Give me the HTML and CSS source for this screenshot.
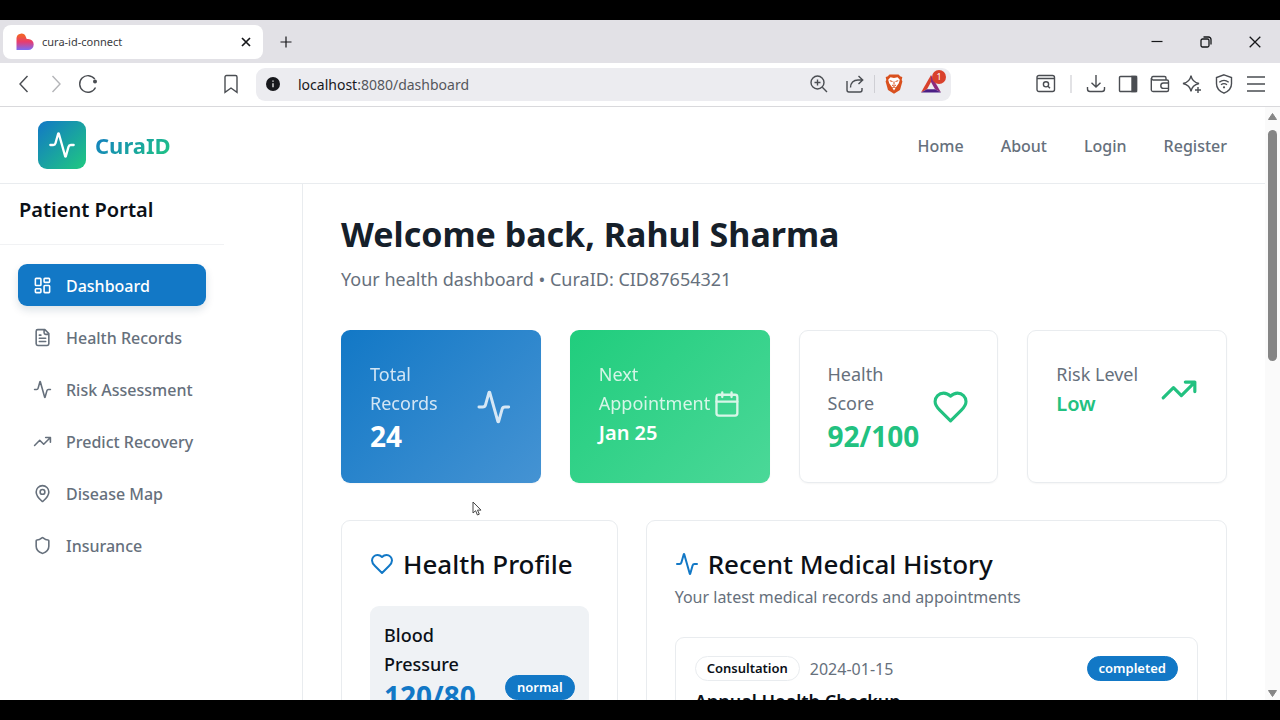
FILE: index.html
```html
<!DOCTYPE html>
<html lang="en">
<head>
<meta charset="utf-8">
<meta name="viewport" content="width=device-width, initial-scale=1">
<title>cura-id-connect</title>
<link rel="stylesheet" href="styles.css">
</head>
<body>
<svg class="defs" aria-hidden="true">
  <defs>
    <linearGradient id="heart-fill" x1="0" y1="0" x2="0" y2="1"><stop offset="0.1" stop-color="#f2622a"/><stop offset="0.5" stop-color="#e83c6e"/><stop offset="1" stop-color="#7a6cf6"/></linearGradient>
    <symbol id="i-activity" viewBox="0 0 24 24"><path d="M22 12h-2.48a2 2 0 0 0-1.93 1.46l-2.35 8.36a.25.25 0 0 1-.48 0L9.24 2.18a.25.25 0 0 0-.48 0l-2.35 8.36A2 2 0 0 1 4.49 12H2"/></symbol>
    <symbol id="i-heart" viewBox="0 0 24 24"><path d="M19 14c1.49-1.46 3-3.21 3-5.5A5.5 5.5 0 0 0 16.5 3c-1.76 0-3 .5-4.5 2-1.5-1.5-2.74-2-4.5-2A5.5 5.5 0 0 0 2 8.5c0 2.3 1.5 4.05 3 5.5l7 7Z"/></symbol>
    <symbol id="i-trend" viewBox="0 0 24 24"><path d="m22 7-8.500 8.500-5-5L2 17M16 7h6v6"/></symbol>
  </defs>
</svg>

<div class="window">
  <div class="tabbar">
    <div class="tab">
      <svg class="favicon" viewBox="0 0 18 18"><path d="M0.500 5a4.800 4.800 0 0 1 9.300-1.200l.9 2.200h1.500a5.400 5.400 0 0 1 0 11H0.500z" fill="url(#heart-fill)"/></svg>
      <span class="tab-title">cura-id-connect</span>
      <button class="tab-btn" aria-label="Close tab"><svg class="ic10" viewBox="0 0 10 10"><path d="M1 1l8 8M9 1L1 9" stroke-width="1.700"/></svg></button>
    </div>
    <button class="tab-btn" aria-label="New tab"><svg class="ic12" viewBox="0 0 12 12"><path d="M6 0.500v11M0.500 6h11" stroke-width="1.200"/></svg></button>
    <div class="window-controls">
      <button class="tab-btn" aria-label="Minimize"><svg class="ic12" viewBox="0 0 12 12"><path d="M0.500 5.500h11" stroke-width="1.200"/></svg></button>
      <button class="tab-btn" aria-label="Restore"><svg class="ic12" viewBox="0 0 12 12"><rect x="1" y="3" width="8" height="8" rx="1.500" stroke-width="1.300"/><path d="M3.500 1h5A2.500 2.500 0 0 1 11 3.500v5" stroke-width="1.300"/></svg></button>
      <button class="tab-btn" aria-label="Close window"><svg class="ic12" viewBox="0 0 12 12"><path d="M0.700 0.700l10.600 10.600M11.300 0.700L0.700 11.300" stroke-width="1.300"/></svg></button>
    </div>
  </div>

  <div class="toolbar">
    <div class="history">
      <button class="tool" aria-label="Back"><svg class="ic20" viewBox="0 0 20 20"><path d="M13.500 2L6 10l7.500 8"/></svg></button>
      <button class="tool faint" aria-label="Forward"><svg class="ic20" viewBox="0 0 20 20"><path d="M6.500 2L14 10l-7.500 8"/></svg></button>
      <button class="tool" aria-label="Reload"><svg class="ic20" viewBox="0 0 20 20"><path d="M17.500 13.500A8.300 8.300 0 1 1 16.800 5.200"/><circle cx="17" cy="7.500" r="2" fill="currentColor" stroke="none"/></svg></button>
    </div>
    <button class="tool bookmark" aria-label="Bookmark"><svg class="ic20" viewBox="0 0 20 20"><path d="M4 3a1.500 1.500 0 0 1 1.500-1.500h9A1.500 1.500 0 0 1 16 3v15.300l-6-4.300-6 4.300z"/></svg></button>
    <div class="address">
      <svg class="ic14" viewBox="0 0 14 14"><circle cx="7" cy="7" r="7" fill="#17181c" stroke="none"/><path d="M7 6.200v4M7 3.600v1.200" stroke="#fff" stroke-width="1.200"/></svg>
      <span class="url">localhost<span class="url-rest">:8080/dashboard</span></span>
      <button class="tool" aria-label="Zoom"><svg class="ic18" viewBox="0 0 18 18"><circle cx="7.500" cy="7.500" r="6.500"/><path d="M12.300 12.300L17 17M7.500 4.500v6M4.500 7.500h6"/></svg></button>
      <button class="tool" aria-label="Share"><svg class="ic18" viewBox="0 0 18 18"><path d="M1 6v9a2 2 0 0 0 2 2h11a2 2 0 0 0 2-2v-2M4.500 12.500c0-4.500 3-7.500 7.500-7.500h4.500M12.500 1l4.200 4-4.200 4"/></svg></button>
      <span class="divider"></span>
      <button class="tool" aria-label="Brave Shields"><svg class="shield" viewBox="0 0 18 20"><path d="M4.500 0.500h9l2 2 1.800.5-.6 3 .7 1.500-2.400 8.500L9 19.800 3 16 .6 7.500 1.300 6 .7 3l1.800-.5z" fill="#d9501e" stroke="none"/><path d="M5.500 3.200L9 4l3.500-.8 2.300 2.600-1 3.400-2.300 3.200L9 16.500l-2.500-4.100-2.300-3.200-1-3.400z" fill="#fff" stroke="none"/><path d="M4.800 6.700l2.700.8M13.200 6.700l-2.700.8M9 7.500v3.200M7 11l2 1.200 2-1.200M7.200 13.800L9 13l1.800.8" stroke="#d9501e" stroke-width="1"/></svg></button>
      <button class="tool rewards" aria-label="Brave Rewards"><svg class="ic20" viewBox="0 0 20 20"><path d="M10 1L0 18.500l6-3.300L10 8z" fill="#d9412c" stroke="none"/><path d="M10 1v7l4 7.200 6 3.300z" fill="#8d2a7c" stroke="none"/><path d="M0 18.500l6-3.300h8l6 3.300z" fill="#4c1f85" stroke="none"/></svg><span class="badge">1</span></button>
    </div>
    <div class="extensions">
      <button class="tool" aria-label="Search tabs"><svg class="ic20" viewBox="0 0 20 20"><rect x="1" y="1.500" width="17.500" height="16" rx="2"/><path d="M1 4.500h17.500M12 12.200l2 2"/><circle cx="10" cy="10.300" r="2.600"/></svg></button>
      <span class="divider light"></span>
      <button class="tool" aria-label="Downloads"><svg class="ic20" viewBox="0 0 20 20"><path d="M10 1v12M5.500 8.700L10 13l4.500-4.300M1.500 13v2a2.500 2.500 0 0 0 2.500 2.500h12a2.500 2.500 0 0 0 2.500-2.500v-2"/></svg></button>
      <button class="tool" aria-label="Sidebar"><svg class="ic20" viewBox="0 0 20 20"><rect x="1.500" y="2.500" width="17" height="15" rx="1"/><path d="M14 2.500h4.500v15H14z" fill="currentColor"/></svg></button>
      <button class="tool" aria-label="Wallet"><svg class="ic20" viewBox="0 0 20 20"><path d="M16 6V4a1.500 1.500 0 0 0-1.500-1.500H3a1.800 1.800 0 0 0 0 3.500h14A1.500 1.500 0 0 1 18.500 7.500V16a1.500 1.500 0 0 1-1.500 1.500H3A1.800 1.800 0 0 1 1.300 16V4M18.500 9h-5a2.700 2.700 0 0 0 0 5.400h5"/></svg></button>
      <button class="tool" aria-label="Leo AI"><svg class="ic20" viewBox="0 0 20 20"><path d="M9 1.500q1 6.500 8 8-7 1.500-8 8-1-6.500-8-8 7-1.500 8-8zM16 13v6M13 16h6"/></svg></button>
      <button class="tool" aria-label="VPN"><svg class="ic20" viewBox="0 0 20 20"><path d="M10 .8l7.500 2.700v6.200c0 4.600-3.500 7.800-7.500 9.500-4-1.700-7.500-4.900-7.500-9.500V3.500zM5.300 8.300c2.800-2.300 6.600-2.300 9.400 0M7 10.800c1.900-1.500 4.100-1.500 6 0"/><circle cx="10" cy="13.300" r="1.100" fill="currentColor" stroke="none"/></svg></button>
      <button class="tool" aria-label="Menu"><svg class="ic20" viewBox="0 0 20 20"><path d="M1 3h18M1 10h18M1 17h18"/></svg></button>
    </div>
  </div>

  <div class="viewport">
    <div class="page">
      <header class="site-header">
        <a class="brand" href="#">
          <span class="brand-mark"><svg class="lucide brand-icon"><use href="#i-activity"/></svg></span>
          <span class="brand-name">CuraID</span>
        </a>
        <nav class="site-nav">
          <a href="#">Home</a><a href="#">About</a><a href="#">Login</a><a href="#">Register</a>
        </nav>
      </header>

      <div class="columns">
        <aside class="sidebar">
          <div class="sidebar-inner">
            <h2 class="portal-title">Patient Portal</h2>
            <nav class="menu">
              <a class="menu-item active" href="#"><svg class="lucide small" viewBox="0 0 24 24"><rect x="3" y="3" width="7" height="9" rx="1"/><rect x="14" y="3" width="7" height="5" rx="1"/><rect x="14" y="12" width="7" height="9" rx="1"/><rect x="3" y="16" width="7" height="5" rx="1"/></svg>Dashboard</a>
              <a class="menu-item" href="#"><svg class="lucide small" viewBox="0 0 24 24"><path d="M15 2H6a2 2 0 0 0-2 2v16a2 2 0 0 0 2 2h12a2 2 0 0 0 2-2V7ZM14 2v4a2 2 0 0 0 2 2h4M10 9H8M16 13H8M16 17H8"/></svg>Health Records</a>
              <a class="menu-item" href="#"><svg class="lucide small"><use href="#i-activity"/></svg>Risk Assessment</a>
              <a class="menu-item" href="#"><svg class="lucide small"><use href="#i-trend"/></svg>Predict Recovery</a>
              <a class="menu-item" href="#"><svg class="lucide small" viewBox="0 0 24 24"><path d="M20 10c0 4.993-5.539 10.193-7.399 11.799a1 1 0 0 1-1.202 0C9.539 20.193 4 14.993 4 10a8 8 0 0 1 16 0"/><circle cx="12" cy="10" r="3"/></svg>Disease Map</a>
              <a class="menu-item" href="#"><svg class="lucide small" viewBox="0 0 24 24"><path d="M20 13c0 5-3.500 7.500-7.660 8.950a1 1 0 0 1-.67-.01C7.500 20.500 4 18 4 13V6a1 1 0 0 1 1-1c2 0 4.500-1.200 6.240-2.720a1.170 1.170 0 0 1 1.520 0C14.510 3.810 17 5 19 5a1 1 0 0 1 1 1z"/></svg>Insurance</a>
            </nav>
          </div>
        </aside>

        <main class="content">
          <h1 class="welcome">Welcome back, Rahul Sharma</h1>
          <p class="subtitle">Your health dashboard • CuraID: CID87654321</p>

          <section class="stats">
            <article class="stat blue">
              <div class="stat-row"><div><p class="stat-label">Total Records</p><p class="stat-value">24</p></div><svg class="lucide large"><use href="#i-activity"/></svg></div>
            </article>
            <article class="stat green">
              <div class="stat-row"><div><p class="stat-label">Next Appointment</p><p class="stat-note">Jan 25</p></div><svg class="lucide large" viewBox="0 0 24 24"><path d="M8 2v4M16 2v4M3 10h18"/><rect x="3" y="4" width="18" height="18" rx="2"/></svg></div>
            </article>
            <article class="stat plain">
              <div class="stat-row"><div><p class="stat-label">Health Score</p><p class="stat-value">92/100</p></div><svg class="lucide large"><use href="#i-heart"/></svg></div>
            </article>
            <article class="stat plain">
              <div class="stat-row"><div><p class="stat-label">Risk Level</p><p class="stat-note">Low</p></div><svg class="lucide large"><use href="#i-trend"/></svg></div>
            </article>
          </section>

          <section class="panels">
            <article class="panel">
              <h2 class="panel-title"><svg class="lucide medium"><use href="#i-heart"/></svg>Health Profile</h2>
              <div class="vital">
                <div class="vital-text"><p class="vital-label">Blood Pressure</p><p class="vital-value">120/80</p></div>
                <span class="pill">normal</span>
              </div>
            </article>
            <article class="panel wide">
              <h2 class="panel-title"><svg class="lucide medium"><use href="#i-activity"/></svg>Recent Medical History</h2>
              <p class="panel-note">Your latest medical records and appointments</p>
              <div class="record">
                <div class="record-head"><span class="pill outline">Consultation</span><time class="record-date">2024-01-15</time><span class="pill">completed</span></div>
                <h3 class="record-title">Annual Health Checkup</h3>
              </div>
            </article>
          </section>
        </main>
      </div>
    </div>
    <div class="scrollbar" aria-hidden="true">
      <svg class="arrow" viewBox="0 0 11 9"><path d="M5.500 1.500L9.500 7.500h-8z"/></svg>
      <div class="track"><div class="thumb"></div></div>
      <svg class="arrow" viewBox="0 0 11 9"><path d="M1.500 1.500h8L5.500 7.500z"/></svg>
    </div>
  </div>
</div>
<svg class="cursor" viewBox="0 0 10 15" aria-hidden="true"><path d="M1 1v11l2.600-2.300L5.400 14l1.900-.8-1.800-4.100H9z"/></svg>
</body>
</html>
```
FILE: styles.css
```css
:root {
  --blue: #1278c6;
  --green: #22c180;
  --ink: #0b1017;
  --muted: #66707c;
  --line: #e9ecef;
}
* { box-sizing: border-box; }
body {
  margin: 0;
  height: 100vh;
  padding: 20px 0;
  background: #000;
  color: var(--ink);
  font-family: "Noto Sans", "Open Sans", sans-serif;
  overflow: hidden;
}
h1, h2, h3, p { margin: 0; }
a { color: inherit; text-decoration: none; }
button { border: 0; padding: 0; background: none; color: inherit; font: inherit; display: flex; }
svg { display: block; fill: none; stroke: currentColor; flex: none; }
.defs { position: absolute; width: 0; height: 0; }
.ic10 { width: 10px; height: 10px; }
.ic12 { width: 12px; height: 12px; }
.ic14 { width: 14px; height: 14px; }
.ic18 { width: 18px; height: 18px; }
.ic20 { width: 20px; height: 20px; }

.window { height: 100%; display: flex; flex-direction: column; background: #fff; }

/* Browser chrome */
.tabbar { display: flex; align-items: center; height: 43px; padding: 0 19px 0 3px; gap: 17px; background: #e2e1e6; flex: none; }
.tab { display: flex; align-items: center; gap: 8px; width: 260px; height: 34px; padding: 0 12px 0 13px; background: #fff; border-radius: 8px; }
.favicon { width: 18px; height: 18px; stroke: none; }
.tab-title { flex: 1; font-size: 11px; color: #3a3b40; }
.tab-btn { color: #16171a; }
.window-controls { display: flex; gap: 37px; margin-left: auto; }
.toolbar { display: flex; align-items: center; height: 44px; padding: 0 14px 1px; border-bottom: 1px solid #d9d9dc; flex: none; }
.tool { color: #4a4d52; stroke-width: 1.4; }
.tool.faint { color: #b4b5b8; }
.history { display: flex; gap: 12px; }
.bookmark { margin-left: 123px; }
.address { display: flex; align-items: center; gap: 18px; flex: 1; height: 33px; margin: 0 85px 0 15px; padding: 0 10px; background: #ececf0; border-radius: 9px; }
.url { flex: 1; font-size: 14px; color: #17181c; }
.url-rest { color: #55575c; }
.divider { width: 1px; height: 18px; margin: 0 -8px; background: #cfcfd4; }
.divider.light { width: 2px; margin: 0 2px; background: #e2e2e5; }
.shield { width: 18px; height: 20px; }
.rewards { position: relative; }
.badge { position: absolute; top: -4px; right: -5px; width: 14px; height: 14px; border-radius: 7px; background: #d9412c; color: #fff; font-size: 9px; line-height: 14px; text-align: center; }
.extensions { display: flex; align-items: center; gap: 12px; }

/* Page */
.viewport { flex: 1; min-height: 0; display: flex; }
.page { flex: 1; min-width: 0; overflow: hidden; }
.scrollbar { display: flex; flex-direction: column; align-items: center; gap: 9px; width: 15px; padding: 5px 0 2px; background: #fafafa; }
.arrow { width: 11px; height: 9px; fill: #858585; stroke: #858585; stroke-linejoin: round; }
.track { flex: 1; }
.thumb { width: 9px; height: 42%; border-radius: 5px; background: #858585; }

.site-header { display: flex; align-items: center; justify-content: space-between; height: 77px; padding: 0 38px; border-bottom: 1px solid var(--line); }
.brand { display: flex; align-items: center; gap: 9px; }
.brand-mark { display: flex; padding: 10px; border-radius: 9px; background: linear-gradient(135deg, #1278c6, #20c980); color: #fff; }
.brand-icon { width: 28px; height: 28px; }
.brand-name { font-size: 22px; font-weight: 700; line-height: 34px; color: transparent; background: linear-gradient(135deg, #1278c6, #20c980); background-clip: text; }
.site-nav { display: flex; gap: 37px; padding-top: 2px; font-size: 16px; font-weight: 500; color: var(--muted); }
.lucide { stroke-width: 2; stroke-linecap: round; stroke-linejoin: round; }

.columns { display: flex; }
.sidebar { width: 303px; border-right: 1px solid var(--line); flex: none; }
.sidebar-inner { width: 224px; }
.portal-title { padding: 9px 19px 18px; border-bottom: 1px solid #f1f2f4; font-size: 20px; font-weight: 600; line-height: 33px; }
.menu { display: flex; flex-direction: column; gap: 10px; padding: 19px 18px; }
.menu-item { display: flex; align-items: center; gap: 14px; height: 42px; padding: 1px 0 0 15px; border-radius: 9px; font-size: 16px; font-weight: 500; color: var(--muted); white-space: nowrap; }
.menu-item.active { background: var(--blue); color: #fff; box-shadow: 0 4px 8px #10305024; }
.small { width: 19px; height: 19px; }
.medium { width: 24px; height: 24px; color: var(--blue); }
.large { height: 38px; width: 38px; flex: 0 1 auto; min-width: 0; }

.content { flex: 1; min-width: 0; height: 720px; padding: 28px 38px; }
.welcome { font-size: 34px; font-weight: 700; line-height: 44px; color: #16202a; }
.subtitle { margin-top: 8px; font-size: 18px; line-height: 30px; color: var(--muted); }
.stats { display: grid; grid-template-columns: repeat(4, minmax(0, 1fr)); gap: 29px; margin-top: 36px; }
.stat { padding: 29px 28px 28px; border: 1px solid var(--line); border-radius: 9px; box-shadow: 0 1px 2px #0000000a; }
.stat.blue { border-color: transparent; background: linear-gradient(135deg, #1278c6, #4593d3) border-box; color: #fff; }
.stat.green { border-color: transparent; background: linear-gradient(135deg, #20cd7d, #4bd898) border-box; color: #fff; }
.stat.plain { color: var(--green); }
.stat-row { display: flex; align-items: center; justify-content: space-between; }
.stat-label { font-size: 18px; line-height: 29px; opacity: 0.8; }
.stat .large { opacity: 0.8; }
.plain .stat-label { color: var(--muted); opacity: 1; }
.plain .large { opacity: 1; }
.stat-value { font-size: 28px; font-weight: 700; line-height: 36px; }
.stat-note { font-size: 20px; font-weight: 600; line-height: 30px; }

.panels { display: grid; grid-template-columns: repeat(3, minmax(0, 1fr)); gap: 28px; margin-top: 37px; }
.panel { height: 400px; padding: 28px; border: 1px solid var(--line); border-radius: 9px; }
.wide { grid-column: span 2; }
.panel-title { display: flex; align-items: center; gap: 9px; font-size: 26px; font-weight: 500; line-height: 30px; white-space: nowrap; }
.panel-note { margin-top: 6px; font-size: 16px; line-height: 24px; color: var(--muted); }
.vital { display: flex; align-items: center; justify-content: space-between; min-height: 162px; margin-top: 27px; padding: 15px 14px; border-radius: 9px; background: #eff2f5; }
.vital-text { align-self: flex-start; }
.vital-label { font-size: 18px; font-weight: 500; line-height: 29px; }
.vital-value { font-size: 28px; font-weight: 700; line-height: 34px; color: var(--blue); }
.pill { padding: 0 11px; border: 1px solid var(--blue); border-radius: 13px; background: var(--blue); color: #fff; font-size: 13px; font-weight: 600; line-height: 23px; }
.pill.outline { border-color: var(--line); background: none; color: var(--ink); }
.record { margin-top: 28px; padding: 18px 19px; border: 1px solid var(--line); border-radius: 9px; }
.record-head { display: flex; align-items: center; gap: 10px; }
.record-date { flex: 1; font-size: 16px; line-height: 24px; color: var(--muted); }
.record-title { margin-top: 6px; font-size: 18px; font-weight: 600; line-height: 29px; }

.cursor { position: absolute; left: 472px; top: 501px; width: 10px; height: 15px; fill: #fff; stroke: #444; stroke-width: 1; }
```
